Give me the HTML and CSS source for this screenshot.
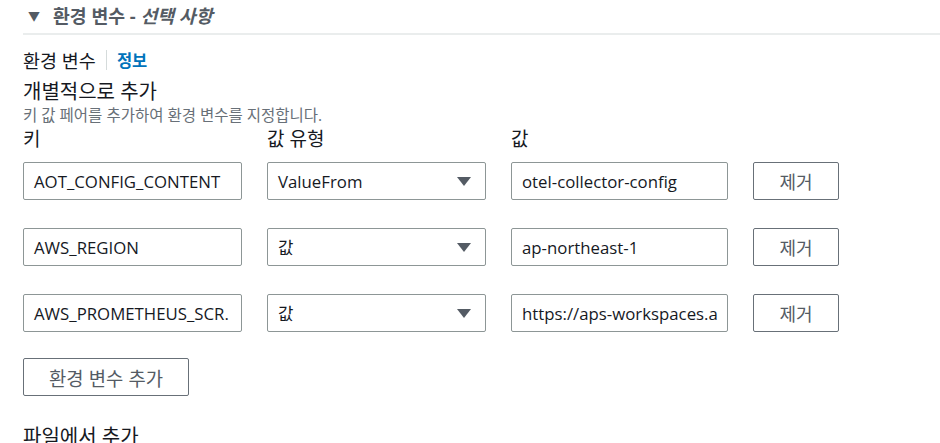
FILE: index.html
```html
<!DOCTYPE html>
<html lang="ko">
<head>
<meta charset="utf-8">
<link rel="stylesheet" href="styles.css">
</head>
<body>
<div class="page">
  <div class="section-head">
    <span class="caret">▼</span>
    <span class="head-title">환경 변수 - <em>선택 사항</em></span>
  </div>
  <div class="section-body">
    <div class="label-row">
      <span class="label">환경 변수</span>
      <span class="sep"></span>
      <a class="info">정보</a>
    </div>
    <div class="sub-title">개별적으로 추가</div>
    <div class="desc">키 값 페어를 추가하여 환경 변수를 지정합니다.</div>
    <div class="grid">
      <div class="col-label">키</div>
      <div class="col-label">값 유형</div>
      <div class="col-label">값</div>
      <div></div>

      <div class="field">AOT_CONFIG_CONTENT</div>
      <div class="field select"><span>ValueFrom</span><span class="tri"></span></div>
      <div class="field">otel-collector-config</div>
      <div class="btn">제거</div>

      <div class="field">AWS_REGION</div>
      <div class="field select"><span>값</span><span class="tri"></span></div>
      <div class="field">ap-northeast-1</div>
      <div class="btn">제거</div>

      <div class="field">AWS_PROMETHEUS_SCR.</div>
      <div class="field select"><span>값</span><span class="tri"></span></div>
      <div class="field">https://aps-workspaces.a</div>
      <div class="btn">제거</div>
    </div>
    <div class="btn add">환경 변수 추가</div>
    <div class="sub-title file">파일에서 추가</div>
  </div>
</div>
</body>
</html>
```
FILE: styles.css
```css
* { box-sizing: border-box; }
html, body { margin: 0; padding: 0; background: #ffffff; }
body {
  font-family: "Open Sans", "Noto Sans CJK KR", sans-serif;
  color: #16191f;
  overflow: hidden;
  height: 443px;
}
.page { padding-left: 23px; }
.section-head {
  display: flex;
  align-items: center;
  height: 35px;
  padding-left: 5px;
  border-bottom: 2px solid #eaeded;
  color: #545b64;
  font-weight: 700;
  font-size: 18.3px;
}
.caret { font-size: 12px; margin-right: 13px; position: relative; top: -1px; }
.head-title { padding-bottom: 4px; }
.head-title em { font-style: italic; }
.section-body { padding-top: 13px; }
.label-row {
  display: flex;
  align-items: center;
  height: 24px;
  font-size: 18.5px;
}
.sep {
  width: 1px;
  height: 20px;
  background: #d5dbdb;
  margin: 0 10px;
}
.info { color: #0073bb; font-weight: 700; font-size: 16.5px; }
.sub-title { font-size: 20px; margin-top: 7px; line-height: 26px; }
.desc { font-size: 15.5px; color: #687078; line-height: 20px; }
.grid {
  display: grid;
  grid-template-columns: 219px 219px 217px 86px;
  column-gap: 25px;
  row-gap: 28px;
  margin-top: 2px;
}
.col-label { font-size: 19px; line-height: 24px; margin-bottom: -17px; }
.field {
  height: 38px;
  border: 1px solid #8d9696;
  border-radius: 2px;
  display: flex;
  align-items: center;
  padding: 0 10px;
  font-size: 16.8px;
  white-space: nowrap;
  overflow: hidden;
}
.select { justify-content: space-between; padding-right: 14px; }
.tri {
  width: 0; height: 0;
  border-left: 7px solid transparent;
  border-right: 7px solid transparent;
  border-top: 9px solid #545b64;
}
.btn {
  height: 38px;
  border: 1px solid #687078;
  border-radius: 2px;
  display: flex;
  align-items: center;
  justify-content: center;
  font-size: 18px;
  color: #545b64;
  font-family: "Noto Sans CJK KR", sans-serif;
}
.add { width: 166px; margin-top: 26px; height: 38px; font-size: 18.8px; }
.file { margin-top: 28px; }
```
